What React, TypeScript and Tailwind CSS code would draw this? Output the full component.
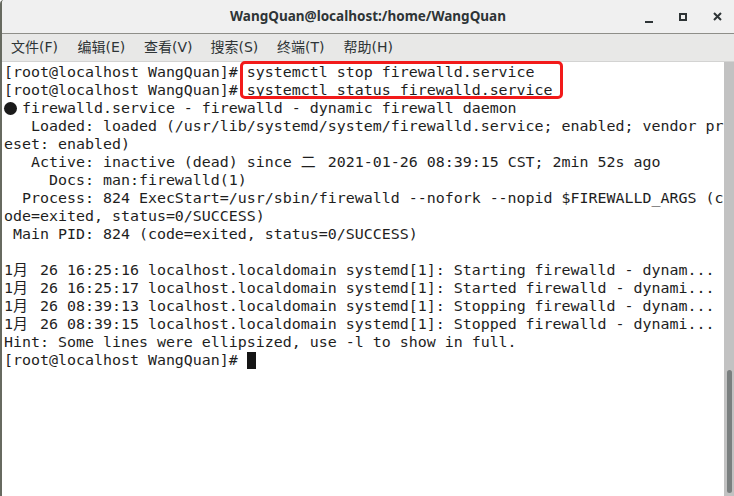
import React from "react";

const mono = {
  fontFamily: '"DejaVu Sans Mono", "Noto Sans CJK SC", monospace',
};

// wide CJK glyph takes two terminal cells
const Wide: React.FC<{ ch: string }> = ({ ch }) => (
  <span className="inline-block w-[18px] text-left">{ch}</span>
);

const Line: React.FC<{ children?: React.ReactNode }> = ({ children }) => (
  <div className="h-[18px] leading-[18px] whitespace-pre">{children}</div>
);

const menus = ["文件(F)", "编辑(E)", "查看(V)", "搜索(S)", "终端(T)", "帮助(H)"];

const logLines = [
  ["16:25:16", "Starting firewalld - dynam..."],
  ["16:25:17", "Started firewalld - dynami..."],
  ["08:39:13", "Stopping firewalld - dynam..."],
  ["08:39:15", "Stopped firewalld - dynami..."],
];

const App: React.FC = () => {
  return (
    <div className="w-[734px] h-[496px] flex flex-col bg-white overflow-hidden border-l-2 border-[#676a60] rounded-tl-[4px]">
      {/* Title bar */}
      <div className="h-[34px] shrink-0 grid grid-cols-[1fr_auto_1fr] items-center bg-[#f0f0f0] border-b border-[#8e8e89]">
        <div />
        <div
          className="text-[13.5px] font-bold text-[#2e3436]"
          style={{ fontFamily: '"Noto Sans", "DejaVu Sans", sans-serif' }}
        >
          WangQuan@localhost:/home/WangQuan
        </div>
        <div className="flex justify-end items-center gap-[26px] pr-[12px] text-[#2e3436]">
          <div className="w-[8px] h-[2px] bg-[#2e3436] mt-[10px]" />
          <div className="w-[8px] h-[8px] border-2 border-[#2e3436]" />
          <svg width="9" height="9" viewBox="0 0 9 9">
            <path d="M1 1 L8 8 M8 1 L1 8" stroke="#2e3436" strokeWidth="2" />
          </svg>
        </div>
      </div>

      {/* Menu bar */}
      <div
        className="h-[28px] shrink-0 flex items-center pl-[9px] bg-[#e8e8e7] border-b border-[#d3d3d2] text-[14px] text-[#2e3436]"
        style={{ fontFamily: '"DejaVu Sans", "Noto Sans CJK SC", sans-serif' }}
      >
        {menus.map((m) => (
          <div key={m} className="w-[66.5px]">
            {m}
          </div>
        ))}
      </div>

      {/* Terminal */}
      <div className="flex-1 flex min-h-0">
        <div
          className="flex-1 relative pt-[1px] pl-[2px] text-[14.95px] text-[#1e1e1e]"
          style={mono}
        >
          <Line>[root@localhost WangQuan]# systemctl stop firewalld.service</Line>
          <Line>[root@localhost WangQuan]# systemctl status firewalld.service</Line>
          <Line>
            <span className="inline-block w-[9px] align-middle">
              <span className="block w-[13px] h-[13px] rounded-full bg-[#1a1a1a] -mt-[2px]" />
            </span>
            {"  firewalld.service - firewalld - dynamic firewall daemon".slice(1)}
          </Line>
          <Line>   Loaded: loaded (/usr/lib/systemd/system/firewalld.service; enabled; vendor pr</Line>
          <Line>eset: enabled)</Line>
          <Line>
            {"   Active: inactive (dead) since "}
            <Wide ch="二" />
            {" 2021-01-26 08:39:15 CST; 2min 52s ago"}
          </Line>
          <Line>     Docs: man:firewalld(1)</Line>
          <Line>  Process: 824 ExecStart=/usr/sbin/firewalld --nofork --nopid $FIREWALLD_ARGS (c</Line>
          <Line>ode=exited, status=0/SUCCESS)</Line>
          <Line> Main PID: 824 (code=exited, status=0/SUCCESS)</Line>
          <Line />
          {logLines.map(([t, msg]) => (
            <Line key={t}>
              1<Wide ch="月" />
              {` 26 ${t} localhost.localdomain systemd[1]: ${msg}`}
            </Line>
          ))}
          <Line>Hint: Some lines were ellipsized, use -l to show in full.</Line>
          <Line>
            {"[root@localhost WangQuan]# "}
            <span className="inline-block w-[9px] h-[17px] bg-[#151515] align-top mt-[1px]" />
          </Line>

          {/* red highlight around the two commands */}
          <div className="absolute top-[-1px] left-[238px] w-[323px] h-[38px] border-[3px] border-[#f21a1a] rounded-[5px]" />
        </div>

        {/* Scrollbar */}
        <div className="w-[10px] shrink-0 bg-[#c2c2c2] flex flex-col justify-end pb-[3px] pl-[3px] pr-[2px]">
          <div className="h-[123px] bg-[#7a7f7f] rounded-full" />
        </div>
      </div>
    </div>
  );
};

export default App;
